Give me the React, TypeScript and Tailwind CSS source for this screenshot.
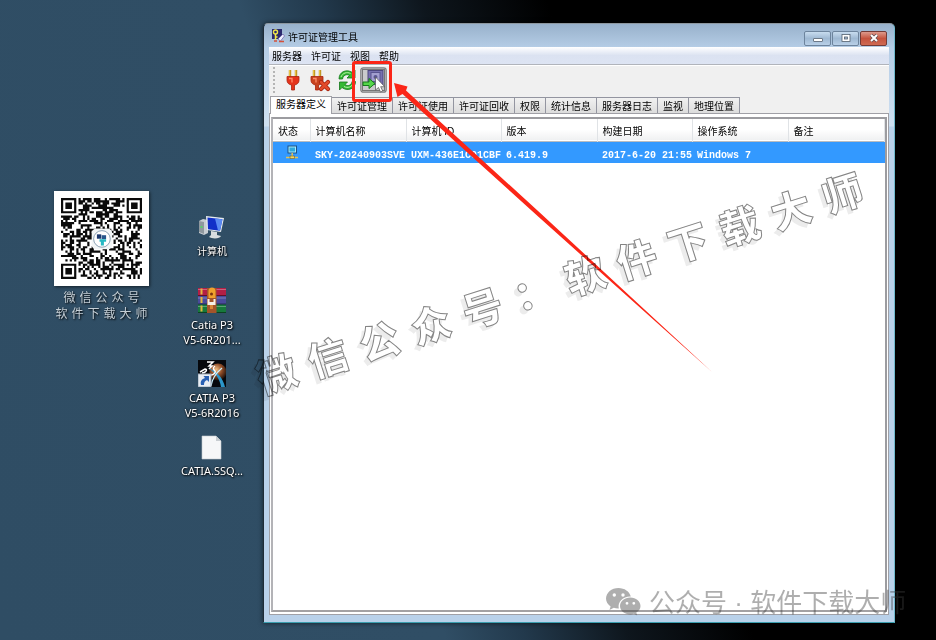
import React from "react";

const UI = "font-['Liberation_Sans','Noto_Sans_CJK_SC',sans-serif]";

/* ---------- QR code ---------- */

const QR_SIZE = 37;

function finder(x: number, y: number, ox: number, oy: number): boolean | null {
  const dx = x - ox;
  const dy = y - oy;
  if (dx < -1 || dy < -1 || dx > 7 || dy > 7) return null;
  const d = Math.max(Math.abs(dx - 3), Math.abs(dy - 3));
  return d === 3 || d <= 1;
}

function qrModules(): string {
  let seed = 20240903;
  let path = "";
  for (let y = 0; y < QR_SIZE; y++) {
    for (let x = 0; x < QR_SIZE; x++) {
      seed = (seed * 1103515245 + 12345) % 2147483648;
      let dark = (seed >> 12) % 100 < 52;
      const ring = Math.max(Math.abs(x - 30), Math.abs(y - 30));
      if (ring <= 2) dark = ring !== 1;
      const mark = finder(x, y, 0, 0) ?? finder(x, y, 30, 0) ?? finder(x, y, 0, 30);
      if (mark !== null) dark = mark;
      if (dark) path += `M${x} ${y}h1v1h-1z`;
    }
  }
  return path;
}

const QR_PATH = qrModules();

function Spaced({ text }: { text: string }) {
  return (
    <p className="flex justify-center gap-1">
      {text.split("").map((c, i) => (
        <span key={i}>{c}</span>
      ))}
    </p>
  );
}

function QrCard() {
  return (
    <figure className="absolute left-[54px] top-[191px] w-[95px]">
      <div className="bg-white p-[7px] shadow-[1px_1px_3px_rgba(0,0,0,0.6)]">
        <svg viewBox="0 0 37 37" className="block w-full" role="img" aria-label="QR">
          <path d={QR_PATH} fill="#0a0a0a" />
          <rect x="14" y="14" width="9.4" height="9.4" rx="2" fill="#f3f6f7" />
          <circle cx="18.7" cy="18.7" r="3.8" fill="#fff" stroke="#7e97ab" strokeWidth=".4" />
          <rect x="16.4" y="16.6" width="2" height="2" fill="#1c3a70" />
          <rect x="18.6" y="17" width="2" height="1.8" fill="#26558b" />
          <path d="M17.6 18.8h3v1.2h-1v1.7h-1.4v-1.7h-.6z" fill="#27b9c4" />
        </svg>
      </div>
      <figcaption className="-mx-2 mt-[3px] font-['Noto_Sans_CJK_SC',sans-serif] text-[12px] leading-[16px] text-[#c5cfd6] [text-shadow:1px_1px_2px_#000]">
        <Spaced text="微信公众号" />
        <Spaced text="软件下载大师" />
      </figcaption>
    </figure>
  );
}

/* ---------- Desktop icons ---------- */

function ComputerIcon() {
  return (
    <svg viewBox="0 0 28 27" className="h-[27px] w-[28px]">
      <path d="M1 7l4-2 5 1v13l-4 2-5-2z" fill="#c9ced2" />
      <path d="M1 7l5 1v12l-5-2z" fill="#8f989e" />
      <path d="M2.500 12h2v2h-2z" fill="#58d06a" />
      <path d="M8 2l18 2-3 14-14-2z" fill="#e6ebee" />
      <path d="M9.500 3.500l15 1.700-2.500 11.500-12-1.500z" fill="#1230c8" />
      <path d="M17 4.400l7.500.8-2.500 11.500-2-.3z" fill="#5b8bf2" />
      <path d="M13 17l6 1 0 3 4 1c-1 3-9 3-12 1l2-2z" fill="#d8dde0" />
    </svg>
  );
}

function ArchiveIcon() {
  return (
    <svg viewBox="0 0 28 27" className="h-[27px] w-[28px]">
      <rect y="1" width="28" height="8" fill="#b31f45" />
      <rect y="9" width="28" height="8.500" fill="#4a4a9c" />
      <rect y="17.500" width="28" height="8.500" fill="#17793c" />
      <path d="M0 2.500h28M0 11h28M0 19.500h28" stroke="#fff" strokeOpacity=".3" />
      <path d="M0 8.500h28M0 17h28M0 25.500h28" stroke="#000" strokeOpacity=".45" />
      <path d="M3.500 1.500v6M3.500 10v6M3.500 18.500v6" stroke="#e2b73f" strokeWidth="2" />
      <rect x="9" y="1" width="9.500" height="25" fill="#a4542a" />
      <path d="M10.500 4a3.500 3.500 0 017 0v7h-7z" fill="#f0a12c" />
      <path d="M9.500 12h2v3h4v-3h2v6h-8z" fill="#f5f1e8" />
      <circle cx="13.500" cy="7" r="1.500" fill="#7c3511" />
      <rect x="12" y="18" width="3" height="4" fill="#d78739" />
    </svg>
  );
}

function CatiaIcon() {
  return (
    <svg viewBox="0 0 28 27" className="h-[27px] w-[28px]">
      <defs>
        <radialGradient id="planet" cx=".4" cy=".35" r=".7">
          <stop offset="0" stopColor="#f6c083" />
          <stop offset=".5" stopColor="#8d4b27" />
          <stop offset="1" stopColor="#120a08" />
        </radialGradient>
      </defs>
      <rect width="28" height="27" fill="#06080c" />
      <circle cx="20" cy="12" r="8.500" fill="url(#planet)" />
      <path d="M10 8c7 4 12 11 13 19h4C25 18 19 11 10 8z" fill="#2b95c9" />
      <path d="M24 8c-6 5-10 11-11 18" stroke="#c9f1ff" fill="none" strokeWidth="1.200" />
      <path d="M9 2h6l-4 4h3l-3 3M2 12l5-3c3 0 1 4-3 4M17 6c-3 2-1 4 0 5s-1 4-4 4" fill="none" stroke="#fff" strokeWidth="1.500" />
      <rect y="14" width="13" height="13" fill="#e9eef4" stroke="#9daab8" />
      <path d="M3 25c-1-4 1-6 4-7l-1.500-2H11v6l-2-2c-2 1-3 2-3 5z" fill="#2961b4" />
    </svg>
  );
}

function FileIcon() {
  return (
    <svg viewBox="0 0 28 27" className="h-[27px] w-[28px]">
      <path d="M4 3h14l5 5v18H4z" fill="#f6f7f8" stroke="#c3c9ce" strokeWidth=".6" />
      <path d="M18 3v5h5z" fill="#c8cdd1" />
    </svg>
  );
}

const shortcuts = [
  { icon: <ComputerIcon />, lines: ["计算机"], text: "text-[10px]" },
  { icon: <ArchiveIcon />, lines: ["Catia P3", "V5-6R201..."], text: "text-[11px]" },
  { icon: <CatiaIcon />, lines: ["CATIA P3", "V5-6R2016"], text: "text-[11px]" },
  { icon: <FileIcon />, lines: ["CATIA.SSQ..."], text: "text-[11px]" },
];

function Shortcuts() {
  return (
    <nav className="absolute left-[172px] top-[214px] flex w-20 flex-col">
      {shortcuts.map((s) => (
        <button
          key={s.lines.join()}
          className={`flex h-[73px] flex-col items-center gap-[3px] font-['Noto_Sans','Noto_Sans_CJK_SC',sans-serif] leading-[15px] text-white [text-shadow:1px_1px_2px_#000,0_0_2px_#000] ${s.text}`}
        >
          {s.icon}
          <span>
            {s.lines.map((l) => (
              <span key={l} className="block whitespace-nowrap">{l}</span>
            ))}
          </span>
        </button>
      ))}
    </nav>
  );
}

/* ---------- Window icons ---------- */

function KeyIcon() {
  return (
    <svg viewBox="0 0 14 14" className="size-[14px]">
      <rect x="1" y="0" width="10" height="10" fill="#2b2a6e" />
      <circle cx="4.500" cy="3" r="2" fill="none" stroke="#f1e84a" strokeWidth="1.400" />
      <path d="M4.500 5v6M4.500 8h2" stroke="#f1e84a" strokeWidth="1.500" />
      <path d="M7 10l5-5 1.500 2-4 5z" fill="#eef0ff" stroke="#6a5aa8" strokeWidth=".7" />
      <path d="M3 12h3M8 12.500h5" stroke="#d5503a" strokeWidth="1.600" />
    </svg>
  );
}

function PlugIcon({ off = false }: { off?: boolean }) {
  return (
    <svg viewBox="0 0 22 24" className="h-[24px] w-[22px]">
      <g transform={off ? "translate(-3 0)" : undefined}>
        <path d="M8 2v7M14 2v7" stroke="#b98a1c" strokeWidth="2.400" />
        <path d="M7.700 2v6M13.700 2v6" stroke="#f2d24f" strokeWidth="1" />
        <path d="M5 8.500h12v4c0 2.500-2 4-4.500 4.500v5h-3v-5C7 16.500 5 15 5 12.500z" fill={off ? "#c8431f" : "#e5331b"} stroke="#a82410" strokeWidth=".8" />
        <path d="M7 10.500h3v4" stroke="#ff8d6b" strokeWidth="1.300" fill="none" />
      </g>
      {off && (
        <>
          <path d="M12 14l7 7M19 14l-7 7" stroke="#a3200e" strokeWidth="4.200" strokeLinecap="round" />
          <path d="M12 14l7 7M19 14l-7 7" stroke="#e24a2a" strokeWidth="2.600" strokeLinecap="round" />
        </>
      )}
    </svg>
  );
}

function RefreshIcon() {
  return (
    <svg viewBox="0 0 22 24" className="h-[24px] w-[22px]">
      <g fill="#35b834" stroke="#14761b" strokeWidth=".8" strokeLinejoin="round">
        <path d="M3 11C3 4 10 .500 16.500 4.500L19 2v8h-8l2.500-2.500C10.500 5.500 7 7.500 6.500 11z" />
        <path d="M19.500 13.500c0 7-7.500 10.500-13.500 6L3.500 22v-8h8L9 16.500c3 2.500 6.500.500 7-3z" />
      </g>
      <path d="M5 9c1.500-4 6-5.500 9.500-3.500M17.500 15c-1.500 4-6 5.500-9.500 3.500" stroke="#b4f3a4" fill="none" />
    </svg>
  );
}

function SafeIcon() {
  return (
    <svg viewBox="0 0 27 26" className="h-[26px] w-[27px]">
      <rect x=".8" y=".8" width="25.400" height="24.400" rx="2.500" fill="#c9cacb" stroke="#7d7e80" strokeWidth="1.200" />
      <rect x="2.500" y="2.500" width="22" height="21" fill="none" stroke="#222" strokeDasharray="1 1" />
      <rect x="8" y="3.500" width="15" height="14" fill="#7771b0" stroke="#4c477e" />
      <rect x="11" y="5.500" width="9" height="9" fill="#a39fd0" stroke="#5a5590" />
      <circle cx="15.500" cy="10" r="2" fill="#5a5590" />
      <path d="M3 15h6v-3.500l6 5-6 5V18.500H3z" fill="#55d64a" stroke="#167a1b" />
      <path d="M15.500 10v13l3-2.500 2 4.500 2.200-1-2-4.300h4z" fill="#fff" stroke="#555" strokeWidth=".7" />
    </svg>
  );
}

function HostIcon() {
  return (
    <svg viewBox="0 0 14 14" className="mx-auto block size-[14px]">
      <rect x="3" y="1" width="8.500" height="7" fill="#a8eafa" stroke="#1a5387" />
      <rect x="4.500" y="2.500" width="5.500" height="4" fill="#2da9dc" />
      <path d="M7.200 8v3M1 12.500h12" stroke="#e0c35a" strokeWidth="1.500" />
      <path d="M5 11h4.500v2.500H5z" fill="#f3d864" stroke="#765f1f" strokeWidth=".6" />
    </svg>
  );
}

function CaptionButton({ kind }: { kind: "min" | "max" | "close" }) {
  const close = kind === "close";
  return (
    <button
      aria-label={kind}
      className={`flex h-[15px] w-[27px] items-center justify-center rounded-[2px] border ${
        close
          ? "border-[#743b36] bg-linear-to-b from-[#dd9a8c] via-[#c5533e] via-50% to-[#cf6a52]"
          : "border-[#6d849d] bg-linear-to-b from-[#c8dcef] via-[#9fb9d3] via-50% to-[#b9d0e8]"
      }`}
    >
      <svg viewBox="0 0 12 10" className="h-[10px] w-[12px]">
        {kind === "min" && <rect x="1.500" y="5.500" width="9" height="3" rx=".5" fill="#fff" stroke="#53606e" strokeWidth=".8" />}
        {kind === "max" && (
          <>
            <rect x="2" y="1.500" width="8" height="7" fill="#fff" stroke="#53606e" strokeWidth=".8" />
            <rect x="4.500" y="4" width="3" height="2" fill="#a9c0d8" stroke="#53606e" strokeWidth=".8" />
          </>
        )}
        {close && (
          <>
            <path d="M3 2l6 6M9 2L3 8" stroke="#5b4a50" strokeWidth="3.200" />
            <path d="M3 2l6 6M9 2L3 8" stroke="#fff" strokeWidth="2" />
          </>
        )}
      </svg>
    </button>
  );
}

/* ---------- Window ---------- */

const menus = ["服务器", "许可证", "视图", "帮助"];
const tabs = ["服务器定义", "许可证管理", "许可证使用", "许可证回收", "权限", "统计信息", "服务器日志", "监视", "地理位置"];
const columns = [
  { name: "状态", width: "w-[37px]" },
  { name: "计算机名称", width: "w-[96px]" },
  { name: "计算机 ID", width: "w-[95px]" },
  { name: "版本", width: "w-[96px]" },
  { name: "构建日期", width: "w-[95px]" },
  { name: "操作系统", width: "w-[96px]" },
  { name: "备注", width: "" },
];
const server = ["SKY-20240903SVE", "UXM-436E1C01CBF", "6.419.9", "2017-6-20 21:55", "Windows 7", ""];

function ToolButton({ label, children }: { label: string; children: React.ReactNode }) {
  return (
    <button aria-label={label} className="flex size-[27px] items-center justify-center">
      {children}
    </button>
  );
}

function LicenseWindow() {
  return (
    <main
      className={`absolute bottom-[17px] left-[263px] right-[41px] top-[23px] flex flex-col rounded-t-[5px] border border-[#1f2c38] border-t-[#8d979f] border-b-[#3a9fb0] border-r-[#6fb9cd] bg-[linear-gradient(#98b1cb_0,#b5cde6_24px,#cfe0f1_102px,#b9d1ea_103px)] px-[5px] pb-[7px] text-[10px] text-black shadow-[0_0_5px_rgba(0,0,0,0.6)] ${UI}`}
    >
      <header className="flex h-[23px] shrink-0 items-center gap-[3px] pl-[2px]">
        <KeyIcon />
        <h1 className="mt-1 flex-1 leading-[16px]">许可证管理工具</h1>
        <div className="flex gap-px pt-[5px] pr-[2px]">
          <CaptionButton kind="min" />
          <CaptionButton kind="max" />
          <CaptionButton kind="close" />
        </div>
      </header>

      <div className="flex min-h-0 flex-1 flex-col bg-[#f0f0f0]">
        <div className="flex h-[18px] shrink-0 items-center gap-[9px] border-b border-[#b1b4bb] bg-linear-to-b from-white via-[#dbe2f1] via-50% to-[#dde4f3] pt-[2px] pl-[3px]">
          {menus.map((m) => (
            <button key={m}>{m}</button>
          ))}
        </div>

        <div className="flex h-[30px] shrink-0 items-center border-t border-white pb-[2px] pl-[4px]">
          <span className="mr-[4px] h-[26px] border-l-2 border-dotted border-[#b5b5b5]" />
          <ToolButton label="连接"><PlugIcon /></ToolButton>
          <ToolButton label="断开"><PlugIcon off /></ToolButton>
          <ToolButton label="刷新"><RefreshIcon /></ToolButton>
          <ToolButton label="导入"><SafeIcon /></ToolButton>
        </div>

        <div role="tablist" className="flex h-[18px] shrink-0 items-end pl-px">
          {tabs.map((t, i) => (
            <button
              key={t}
              role="tab"
              aria-selected={i === 0}
              className={
                i === 0
                  ? "z-10 -mb-px h-[18px] border border-b-0 border-[#a0a0a6] bg-white px-[5px] pb-[2px] leading-[15px]"
                  : "h-[16px] border-r border-t border-[#9395a0] bg-linear-to-b from-[#f1f1f1] to-[#dcdcdc] px-[5px] pt-[2px] leading-[13px]"
              }
            >
              {t}
            </button>
          ))}
        </div>

        <section className="flex min-h-0 flex-1 flex-col border border-[#a0a0a6] bg-white px-px pt-[3px] pb-[2px]">
          <div className="min-h-0 flex-1 border-2 border-[#9c9ca0] border-b-[#a3a1a3] border-l-[#b3b3b7] bg-white">
            <table className="w-full table-fixed border-collapse">
              <thead>
                <tr className="h-[22px] border-b border-[#b9bcc0] bg-linear-to-b from-white via-white to-[#f0f1f2]">
                  {columns.map((c) => (
                    <th key={c.name} className={`border-r border-[#e0e3e6] px-[5px] pt-[3px] text-left font-normal whitespace-nowrap ${c.width}`}>
                      {c.name}
                    </th>
                  ))}
                </tr>
              </thead>
              <tbody>
                <tr className="h-[21px] bg-[#3399ff] font-['Liberation_Mono',monospace] font-bold text-white">
                  <td><HostIcon /></td>
                  {server.map((v, i) => (
                    <td key={i} className="overflow-hidden pt-[6px] pl-[5px] leading-[15px] whitespace-nowrap">{v}</td>
                  ))}
                </tr>
              </tbody>
            </table>
          </div>
        </section>
      </div>
    </main>
  );
}

/* ---------- Overlays ---------- */

function Annotations() {
  return (
    <>
      <div className="absolute left-[352px] top-[61px] h-[41px] w-[40px] rounded-[3px] border-3 border-[#fb2617]" />
      <svg viewBox="0 0 320 292" className="absolute left-[393px] top-[82px] h-[292px] w-[320px]" aria-hidden="true">
        <path d="M1 1L14.500 4.500L13 8.500L148.300 132L319 290L145.700 135L9.500 12L4.500 15Z" fill="#fb2617" />
      </svg>
    </>
  );
}

function Watermarks() {
  return (
    <>
      <div className="pointer-events-none absolute left-[242px] top-[252px] flex -rotate-[17.700deg] gap-[14px] font-['Noto_Sans_CJK_SC',sans-serif] text-[40px] font-black leading-[60px] text-white mix-blend-multiply [-webkit-text-stroke:1px_#848484] [text-shadow:-5px_3px_0_#ececec]">
        {"微信公众号：软件下载大师".split("").map((c, i) => (
          <span key={i}>{c}</span>
        ))}
      </div>
      <div className="pointer-events-none absolute bottom-[19px] left-[606px] flex items-center gap-2 whitespace-nowrap font-['Noto_Sans_CJK_SC',sans-serif] text-[26px] leading-[36px] text-[#3d3d3d] opacity-41">
        <svg viewBox="0 0 35 28" className="h-[28px] w-[35px]" fill="currentColor">
          <path fillRule="evenodd" d="M12.500 0C5.500 0 0 4.700 0 10.500c0 3.300 1.800 6 4.600 8L3.500 22l4.300-2.200c1.500.5 3 .8 5 .7-1.500-7 5-12.500 12-12C23.500 3.500 18.500 0 12.500 0zM8.300 5.300a1.700 1.700 0 110 3.400 1.700 1.700 0 010-3.400zm8.700 0a1.700 1.700 0 110 3.400 1.700 1.700 0 010-3.400z" />
          <path fillRule="evenodd" d="M24.300 9.600C18.500 9.600 14 13.400 14 18s4.500 8.400 10.300 8.400c1.300 0 2.500-.2 3.600-.6l3.300 1.800-.9-3c2.600-1.600 4.200-3.900 4.200-6.600 0-4.600-4.500-8.400-10.200-8.400zM21 13.900a1.400 1.400 0 110 2.800 1.400 1.400 0 010-2.800zm6.800 0a1.400 1.400 0 110 2.800 1.400 1.400 0 010-2.800z" />
        </svg>
        <p>
          公众号<span className="font-['Liberation_Sans',sans-serif]"> · </span>软件下载大师
        </p>
      </div>
    </>
  );
}

export default function App() {
  return (
    <div className="relative h-screen w-full overflow-hidden bg-[linear-gradient(72deg,#2f4d64_0%,#304e65_39%,#22394c_46%,#0e161d_55%,#000_66%)]">
      <QrCard />
      <Shortcuts />
      <LicenseWindow />
      <Annotations />
      <Watermarks />
    </div>
  );
}
